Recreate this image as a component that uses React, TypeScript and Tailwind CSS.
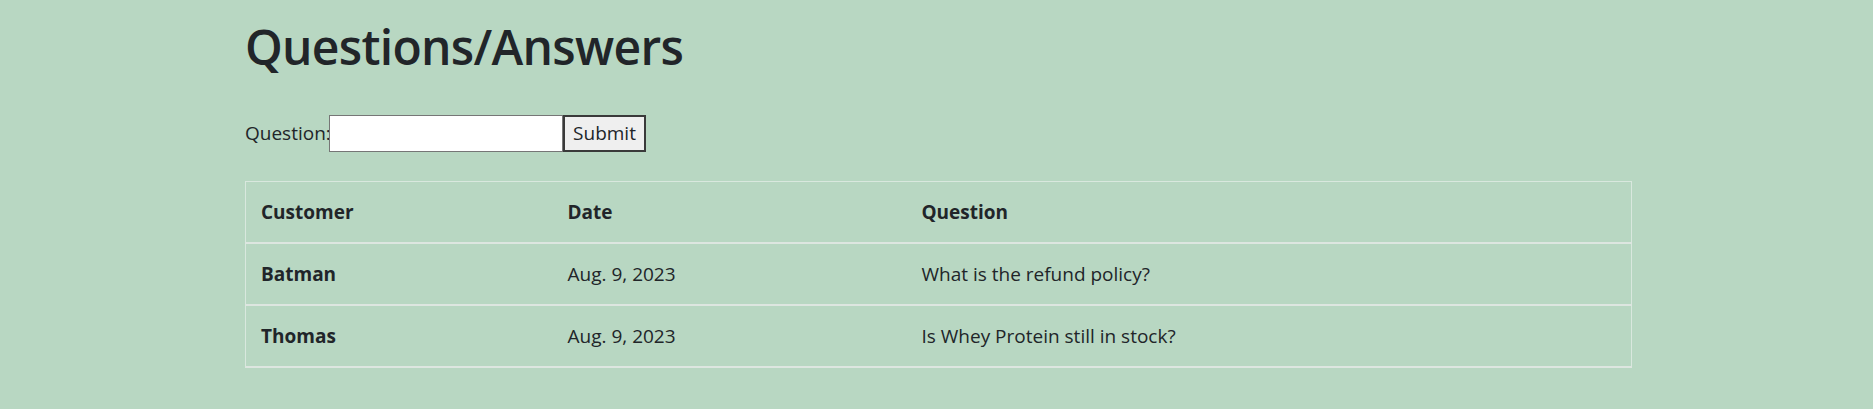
import React from 'react'

interface Question {
  customer: string
  date: string
  text: string
}

const questions: Question[] = [
  { customer: 'Batman', date: 'Aug. 9, 2023', text: 'What is the refund policy?' },
  { customer: 'Thomas', date: 'Aug. 9, 2023', text: 'Is Whey Protein still in stock?' },
]

export default function App() {
  return (
    <div
      className="min-h-[409px] bg-[#b8d7c2] text-[#212529]"
      style={{ fontFamily: '"Open Sans", "Noto Sans", sans-serif' }}
    >
      <div className="mx-auto max-w-[1391px] pl-[4px] pt-[17px]">
        <h1 className="text-[48px] leading-[60px] font-semibold tracking-[-0.7px] mb-[38px]">
          Questions/Answers
        </h1>

        <form className="flex items-center mb-[29px]" onSubmit={e => e.preventDefault()}>
          <label className="text-[19px] w-[84px] whitespace-nowrap">Question:</label>
          <input
            type="text"
            className="w-[234px] h-[37px] bg-white border border-[#767676] px-1 text-[19px] outline-none"
          />
          <button
            type="submit"
            className="w-[83px] h-[37px] bg-[#efefef] border-2 border-[#3a3a3a] text-[19px] leading-none"
          >
            Submit
          </button>
        </form>

        <table className="w-full border-collapse border border-[#d9e8de] text-[19px] leading-[30px]">
          <thead>
            <tr className="border-b-2 border-[#dde6e0]">
              <th className="w-[307px] text-left font-bold px-[15px] py-[15px]">Customer</th>
              <th className="w-[354px] text-left font-bold px-[15px] py-[15px]">Date</th>
              <th className="text-left font-bold px-[15px] py-[15px]">Question</th>
            </tr>
          </thead>
          <tbody>
            {questions.map((q, i) => (
              <tr key={i} className="border-b-2 border-[#dde6e0]">
                <td className="font-bold px-[15px] py-[15px]">{q.customer}</td>
                <td className="px-[15px] py-[15px]">{q.date}</td>
                <td className="px-[15px] py-[15px]">{q.text}</td>
              </tr>
            ))}
          </tbody>
        </table>
      </div>
    </div>
  )
}
